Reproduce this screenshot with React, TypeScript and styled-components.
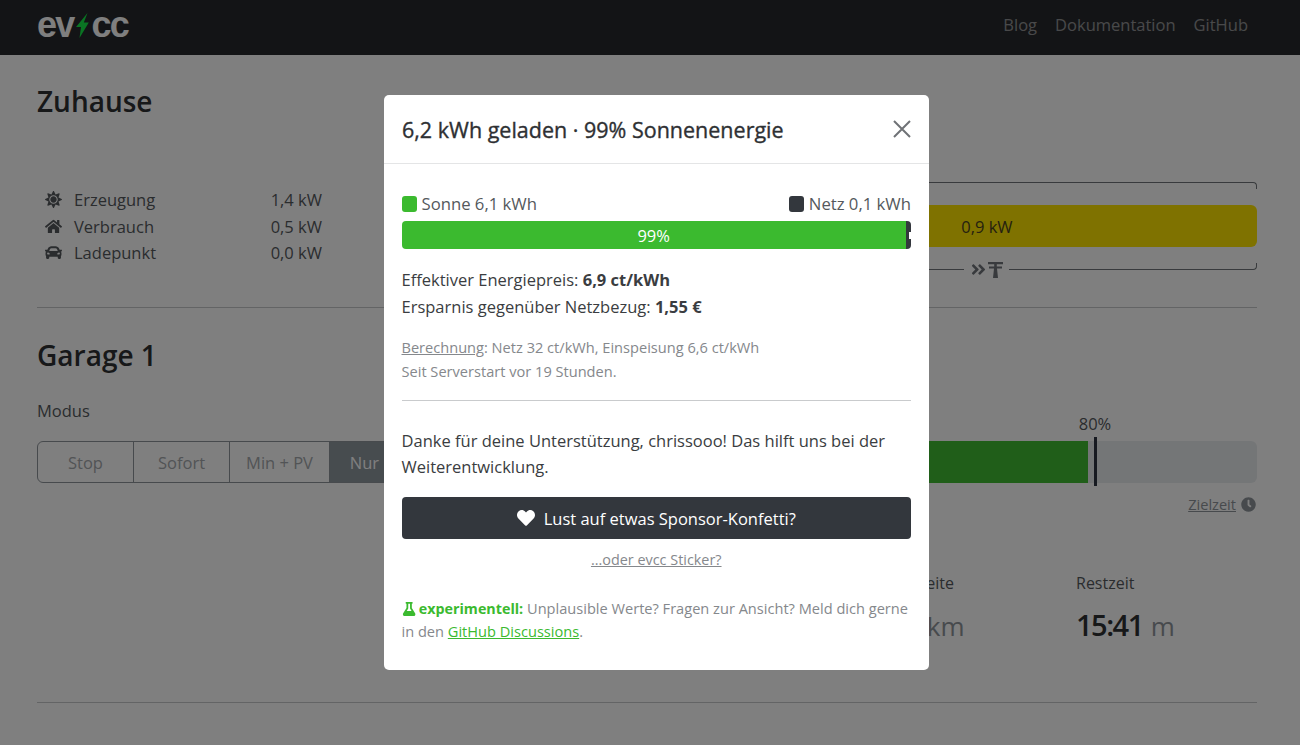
import React from "react";
import styled, { createGlobalStyle } from "styled-components";
import {
  FaAngleDoubleRight,
  FaCar,
  FaClock,
  FaFlask,
  FaHeart,
  FaHome,
  FaSun,
} from "react-icons/fa";

const GlobalStyle = createGlobalStyle`
  html, body {
    margin: 0;
    height: 745px;
    overflow: hidden;
    background: #fff;
    color: #2e3033;
    font-family: "Open Sans", "Noto Sans", sans-serif;
    font-size: 16.5px;
  }
  * { box-sizing: border-box; }
`;

const TopBar = styled.header`
  height: 55px;
  padding: 0 52px 5px 37px;
  background: #26282c;
  display: flex;
  align-items: center;
  justify-content: space-between;
`;

const Logo = styled.div`
  display: flex;
  align-items: center;
  font-family: "Liberation Sans", sans-serif;
  font-size: 36px;
  line-height: 30px;
  font-weight: 700;
  color: #fff;
  letter-spacing: -1.8px;
  svg {
    margin: 0 2px 0 3px;
  }
`;

const Nav = styled.nav`
  display: flex;
  gap: 18px;
  margin-top: -2px;
`;

const NavLink = styled.a`
  font-size: 16.5px;
  color: rgba(255, 255, 255, 0.5);
`;

const Main = styled.main`
  padding: 29px 43px 0 37px;
`;

const Title = styled.h1`
  margin: 0;
  font-size: 28px;
  line-height: 34px;
  font-weight: 600;
`;

const EnergyRow = styled.section`
  margin-top: 64px;
  padding-bottom: 37px;
  display: grid;
  grid-template-columns: 285px 1fr;
  column-gap: 95px;
  border-bottom: 1px solid #c6c8ca;
`;

const EnergyList = styled.div`
  padding: 4.5px 0 0 8px;
`;

const EnergyItem = styled.div`
  display: flex;
  align-items: center;
  height: 26.5px;
  color: #55595d;
`;

const EnergyIcon = styled.span`
  width: 29px;
  display: flex;
  align-items: center;
  font-size: 17px;
`;

const EnergyValue = styled.span`
  margin-left: auto;
`;

const Visual = styled.div`
  display: flex;
  flex-direction: column;
`;

const BracketTop = styled.div`
  height: 7px;
  border-top: 1px solid #70757a;
  border-right: 1px solid #70757a;
  border-top-right-radius: 4px;
`;

const Bar = styled.div`
  height: 42px;
  margin-top: 16px;
  border-radius: 6px;
  display: flex;
  overflow: hidden;
`;

const BarSegment = styled.div<{ $color: string; $width: number }>`
  width: ${(p) => p.$width}%;
  background: ${(p) => p.$color};
  display: flex;
  align-items: center;
  justify-content: center;
  color: #4a4320;
`;

const BracketRow = styled.div`
  margin: 16px 0 0 35.7%;
  height: 7px;
  display: flex;
  align-items: flex-end;
`;

const BracketEnd = styled.div`
  flex: 1;
  height: 7px;
  border-bottom: 1px solid #70757a;
  &:last-child {
    border-right: 1px solid #70757a;
    border-bottom-right-radius: 4px;
  }
`;

const GridLabel = styled.div`
  display: flex;
  align-items: center;
  gap: 1px;
  margin: 0 6px -8px;
  color: #70757a;
  font-size: 17px;
`;

const Loadpoint = styled.section`
  margin-top: 30px;
  padding-bottom: 56px;
  border-bottom: 1px solid #c6c8ca;
`;

const LoadpointBody = styled.div`
  margin-top: 27px;
  display: grid;
  grid-template-columns: 393px 1fr;
  column-gap: 17px;
`;

const ModeLabel = styled.div`
  line-height: 24px;
  color: #55595d;
`;

const ModeGroup = styled.div`
  margin-top: 18px;
  display: flex;
  height: 42px;
  width: 420px;
`;

const ModeButton = styled.button<{ $active?: boolean; $width: number }>`
  width: ${(p) => p.$width}px;
  padding: 0;
  margin-left: -1px;
  font: inherit;
  border: 1px solid #8f959b;
  color: ${(p) => (p.$active ? "#fff" : "#a4a8ac")};
  background: ${(p) => (p.$active ? "#8f989f" : "transparent")};
  &:first-child {
    margin-left: 0;
    border-radius: 6px 0 0 6px;
  }
`;

const ChargeArea = styled.div`
  padding-top: 42px;
`;

const ChargeBar = styled.div`
  position: relative;
  height: 42px;
  border-radius: 6px;
  background: #e9ecef;
`;

const ChargeFill = styled.div`
  height: 100%;
  background: #41bd33;
  border-radius: 6px 0 0 6px;
`;

const TargetMarker = styled.div`
  position: absolute;
  top: -4px;
  bottom: -3px;
  width: 3px;
  background: #2e3442;
`;

const TargetLabel = styled.div`
  position: absolute;
  top: -29px;
  transform: translateX(-50%);
  line-height: 24px;
  color: #55595d;
`;

const TargetTime = styled.div`
  margin-top: 11px;
  display: flex;
  justify-content: flex-end;
  align-items: center;
  gap: 5px;
  padding-right: 1px;
  font-size: 14.6px;
  line-height: 20px;
  color: #8f959b;
  svg {
    font-size: 15px;
  }
`;

const Underlined = styled.span`
  text-decoration: underline;
`;

const Stats = styled.div`
  margin-top: 57px;
  display: grid;
  grid-template-columns: repeat(4, 202.5px);
`;

const Stat = styled.div`
  padding-left: 21.5px;
  &:first-child {
    grid-column: 3;
  }
`;

const StatLabel = styled.div`
  font-size: 16px;
  line-height: 24px;
  color: #55595d;
`;

const StatValue = styled.div`
  margin-top: 10px;
  font-size: 29px;
  line-height: 40px;
  font-weight: 600;
  letter-spacing: -1.5px;
  white-space: nowrap;
`;

const StatUnit = styled.span`
  margin-left: 8px;
  font-size: 26px;
  font-weight: 400;
  letter-spacing: 0;
  color: #8f959b;
`;

const Backdrop = styled.div`
  position: fixed;
  inset: 0;
  background: rgba(0, 0, 0, 0.5);
  display: flex;
  justify-content: center;
  align-items: flex-start;
  padding: 95px 0 0 13px;
`;

const Dialog = styled.div`
  width: 545px;
  height: 575px;
  background: #fff;
  border-radius: 5px;
  color: #2e3033;
`;

const DialogHeader = styled.div`
  height: 69px;
  padding: 0 17px 0 18px;
  border-bottom: 1px solid #e4e5e6;
  display: flex;
  align-items: center;
  justify-content: space-between;
`;

const DialogTitle = styled.h5`
  margin: 0;
  font-size: 21.5px;
  font-weight: 400;
  -webkit-text-stroke: 0.35px currentColor;
`;

const CloseIcon = styled.svg`
  width: 20px;
  height: 20px;
  stroke: #6f7276;
  stroke-width: 2;
  fill: none;
`;

const DialogBody = styled.div`
  padding: 27px 18px 0 17.5px;
`;

const Legend = styled.div`
  display: flex;
  justify-content: space-between;
  font-size: 16.7px;
  line-height: 26px;
  color: #55595d;
`;

const LegendItem = styled.span`
  display: flex;
  align-items: center;
  gap: 5px;
`;

const Swatch = styled.span<{ $color: string }>`
  width: 15px;
  height: 16px;
  border-radius: 3px;
  background: ${(p) => p.$color};
`;

const SplitBar = styled.div`
  margin-top: 4px;
  height: 28px;
  display: flex;
  border-radius: 4px;
  overflow: hidden;
`;

const SplitSun = styled.div<{ $width: number }>`
  width: ${(p) => p.$width}%;
  background: #3bba2f;
  color: #fff;
  display: flex;
  align-items: center;
  justify-content: center;
`;

const SplitGrid = styled.div`
  flex: 1;
  background: #33373d;
  display: flex;
  align-items: center;
  justify-content: flex-end;
  &::after {
    content: "";
    width: 2px;
    height: 7px;
    background: #fff;
  }
`;

const Facts = styled.div`
  margin-top: 17px;
  line-height: 27px;
  color: #3a3d41;
`;

const Note = styled.div`
  margin-top: 15px;
  padding-bottom: 17px;
  border-bottom: 1px solid #c9cbcd;
  font-size: 14.6px;
  line-height: 24px;
  color: #85888c;
`;

const Thanks = styled.p`
  margin: 27px 0 0;
  line-height: 26px;
  color: #3a3d41;
`;

const SponsorButton = styled.button`
  margin-top: 17px;
  width: 100%;
  height: 42px;
  border: 0;
  border-radius: 4px;
  background: #33373d;
  color: #fff;
  font: inherit;
  display: flex;
  align-items: center;
  justify-content: center;
  gap: 9px;
  svg {
    font-size: 18px;
  }
`;

const StickerLink = styled.a`
  display: block;
  margin-top: 10px;
  text-align: center;
  font-size: 14.4px;
  line-height: 22px;
  color: #85888c;
  text-decoration: underline;
`;

const Experimental = styled.p`
  margin: 26px 0 0;
  font-size: 14.6px;
  line-height: 23px;
  color: #85888c;
`;

const ExperimentalTag = styled.strong`
  font-size: 14.3px;
  color: #3bba2f;
  svg {
    margin-right: 3px;
    vertical-align: -2px;
  }
`;

const GreenLink = styled.a`
  color: #3bba2f;
  text-decoration: underline;
`;

const Bolt = () => (
  <svg width="13" height="25" viewBox="0 0 13 25" fill="#14e846">
    <path d="M11.5 0 L0 14 L5 14 L3.5 25 L12.8 9.5 L7.8 9.5 Z" />
  </svg>
);

const Pole = () => (
  <svg width="15" height="17" viewBox="0 0 15 17" fill="currentColor">
    <path d="M0 1h15v2.2H8.8v2.2H14v2H9L10 17H5l1-9.6H1v-2h5.2V3.2H0z" />
  </svg>
);

const energy = [
  { label: "Erzeugung", value: "1,4 kW", icon: <FaSun /> },
  { label: "Verbrauch", value: "0,5 kW", icon: <FaHome /> },
  { label: "Ladepunkt", value: "0,0 kW", icon: <FaCar /> },
];

const modes = [
  { label: "Stop", width: 97 },
  { label: "Sofort", width: 97 },
  { label: "Min + PV", width: 101 },
  { label: "Nur PV", width: 95, active: true },
];

const App = () => (
  <>
    <GlobalStyle />
    <TopBar>
      <Logo>
        ev
        <Bolt />
        cc
      </Logo>
      <Nav>
        <NavLink>Blog</NavLink>
        <NavLink>Dokumentation</NavLink>
        <NavLink>GitHub</NavLink>
      </Nav>
    </TopBar>
    <Main>
      <Title>Zuhause</Title>
      <EnergyRow>
        <EnergyList>
          {energy.map((e) => (
            <EnergyItem key={e.label}>
              <EnergyIcon>{e.icon}</EnergyIcon>
              {e.label}
              <EnergyValue>{e.value}</EnergyValue>
            </EnergyItem>
          ))}
        </EnergyList>
        <Visual>
          <BracketTop />
          <Bar>
            <BarSegment $color="#3bba2f" $width={35.7} />
            <BarSegment $color="#ffe400" $width={64.3}>
              0,9 kW
            </BarSegment>
          </Bar>
          <BracketRow>
            <BracketEnd />
            <GridLabel>
              <FaAngleDoubleRight />
              <Pole />
            </GridLabel>
            <BracketEnd />
          </BracketRow>
        </Visual>
      </EnergyRow>
      <Loadpoint>
        <Title>Garage 1</Title>
        <LoadpointBody>
          <div>
            <ModeLabel>Modus</ModeLabel>
            <ModeGroup>
              {modes.map((m) => (
                <ModeButton key={m.label} $active={m.active} $width={m.width}>
                  {m.label}
                </ModeButton>
              ))}
            </ModeGroup>
          </div>
          <ChargeArea>
            <ChargeBar>
              <ChargeFill style={{ width: "79.1%" }} />
              <TargetLabel style={{ left: "80%" }}>80%</TargetLabel>
              <TargetMarker style={{ left: "79.9%" }} />
            </ChargeBar>
            <TargetTime>
              <Underlined>Zielzeit</Underlined>
              <FaClock />
            </TargetTime>
            <Stats>
              <Stat>
                <StatLabel>Reichweite</StatLabel>
                <StatValue>
                  174<StatUnit>km</StatUnit>
                </StatValue>
              </Stat>
              <Stat>
                <StatLabel>Restzeit</StatLabel>
                <StatValue>
                  15:41<StatUnit>m</StatUnit>
                </StatValue>
              </Stat>
            </Stats>
          </ChargeArea>
        </LoadpointBody>
      </Loadpoint>
    </Main>
    <Backdrop>
      <Dialog>
        <DialogHeader>
          <DialogTitle>6,2 kWh geladen · 99% Sonnenenergie</DialogTitle>
          <CloseIcon viewBox="0 0 20 20">
            <path d="M2 2 L18 18 M18 2 L2 18" />
          </CloseIcon>
        </DialogHeader>
        <DialogBody>
          <Legend>
            <LegendItem>
              <Swatch $color="#3bba2f" />
              Sonne 6,1 kWh
            </LegendItem>
            <LegendItem>
              <Swatch $color="#33373d" />
              Netz 0,1 kWh
            </LegendItem>
          </Legend>
          <SplitBar>
            <SplitSun $width={99}>99%</SplitSun>
            <SplitGrid />
          </SplitBar>
          <Facts>
            Effektiver Energiepreis: <strong>6,9 ct/kWh</strong>
            <br />
            Ersparnis gegenüber Netzbezug: <strong>1,55 €</strong>
          </Facts>
          <Note>
            <Underlined>Berechnung</Underlined>: Netz 32 ct/kWh, Einspeisung 6,6 ct/kWh
            <br />
            Seit Serverstart vor 19 Stunden.
          </Note>
          <Thanks>
            Danke für deine Unterstützung, chrissooo! Das hilft uns bei der
            Weiterentwicklung.
          </Thanks>
          <SponsorButton>
            <FaHeart />
            Lust auf etwas Sponsor-Konfetti?
          </SponsorButton>
          <StickerLink>...oder evcc Sticker?</StickerLink>
          <Experimental>
            <ExperimentalTag>
              <FaFlask />
              experimentell:
            </ExperimentalTag>{" "}
            Unplausible Werte? Fragen zur Ansicht? Meld dich gerne in den{" "}
            <GreenLink>GitHub Discussions</GreenLink>.
          </Experimental>
        </DialogBody>
      </Dialog>
    </Backdrop>
  </>
);

export default App;
